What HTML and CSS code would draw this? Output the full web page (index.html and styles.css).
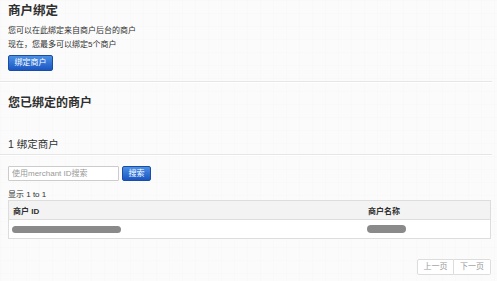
FILE: index.html
```html
<!DOCTYPE html>
<html lang="zh-CN">
<head>
  <meta charset="UTF-8">
  <meta name="viewport" content="width=device-width, initial-scale=1.0">
  <title>商户绑定</title>
  <link rel="stylesheet" href="styles.css">
</head>
<body>
  <div class="page">
    <h1>商户绑定</h1>
    <p class="intro">您可以在此绑定来自商户后台的商户</p>
    <p class="intro">现在，您最多可以绑定5个商户</p>
    <button class="btn btn-bind" type="button">绑定商户</button>

    <hr class="divider">

    <h2>您已绑定的商户</h2>
    <h3>1 绑定商户</h3>
    <hr class="divider divider-tight">

    <form class="search-form">
      <input type="text" class="search-input" placeholder="使用merchant ID搜索">
      <button class="btn btn-search" type="submit">搜索</button>
    </form>

    <div class="count">显示 1 to 1</div>
    <table class="merchant-table">
      <thead>
        <tr>
          <th class="col-id">商户 ID</th>
          <th>商户名称</th>
        </tr>
      </thead>
      <tbody>
        <tr>
          <td><span class="redacted redacted-id"></span></td>
          <td><span class="redacted redacted-name"></span></td>
        </tr>
      </tbody>
    </table>

    <div class="pager">
      <span class="pager-item">上一页</span>
      <span class="pager-item">下一页</span>
    </div>
  </div>
</body>
</html>
```
FILE: styles.css
```css
body {
  margin: 0;
  font-family: "Liberation Sans", "Noto Sans CJK SC", sans-serif;
  color: #2f2f2f;
  background-color: #fbfbfb;
  background-image:
    linear-gradient(rgba(0, 0, 0, 0.006) 1px, transparent 1px),
    linear-gradient(90deg, rgba(0, 0, 0, 0.006) 1px, transparent 1px);
  background-size: 13px 13px;
}
.page {
  padding: 0 6px 0 8px;
}
h1 {
  font-size: 12.5px;
  font-weight: bold;
  line-height: 16px;
  margin: 3px 0 5px;
}
.intro {
  font-size: 8px;
  line-height: 13.5px;
  margin: 0;
}
.btn {
  font-family: inherit;
  font-size: 8px;
  color: #fff;
  height: 16px;
  padding: 0;
  text-align: center;
  border: 1px solid #1b4ea3;
  border-radius: 2px;
  background: linear-gradient(#4b91e6, #1a55c2);
  cursor: pointer;
  line-height: 14px;
}
.btn-bind {
  display: block;
  width: 45px;
  margin-top: 4px;
}
.divider {
  border: none;
  border-top: 1px solid #e6e6e6;
  border-bottom: 1px solid #fff;
  margin: 10px 0 0 -8px;
  width: 492px;
}
h2 {
  font-size: 12px;
  font-weight: bold;
  line-height: 16px;
  margin: 12px 0 0;
}
h3 {
  font-size: 10.5px;
  font-weight: normal;
  line-height: 14px;
  margin: 26px 0 0;
}
.divider-tight {
  margin-top: 3px;
}
.search-form {
  display: flex;
  gap: 3px;
  margin-top: 10px;
}
.search-input {
  box-sizing: border-box;
  width: 111px;
  height: 15px;
  padding: 0 3px;
  font-family: inherit;
  font-size: 8px;
  border: 1px solid #ccc;
  border-radius: 1px;
  background: #fff;
}
.search-input::placeholder {
  color: #999;
}
.btn-search {
  width: 29px;
  height: 15px;
  line-height: 13px;
}
.count {
  font-size: 8px;
  line-height: 11px;
  margin-top: 8px;
}
.merchant-table {
  width: 483px;
  border-collapse: collapse;
  border: 1px solid #ddd;
  font-size: 8px;
}
.merchant-table th {
  text-align: left;
  font-weight: bold;
  height: 18px;
  padding: 0 4px;
  background: #f3f3f3;
  border-bottom: 1px solid #ddd;
}
.merchant-table td {
  height: 18px;
  padding: 0 3px;
  background: #fff;
}
.col-id {
  width: 347px;
}
.redacted {
  display: block;
  height: 7px;
  border-radius: 4px;
  background: #8a8a8a;
  filter: blur(0.7px);
}
.redacted-id {
  width: 109px;
}
.redacted-name {
  width: 39px;
  height: 8px;
}
.pager {
  display: flex;
  justify-content: flex-end;
  margin-top: 20px;
}
.pager-item {
  box-sizing: border-box;
  width: 37px;
  height: 16px;
  line-height: 14px;
  text-align: center;
  font-size: 8px;
  color: #999;
  background: #fff;
  border: 1px solid #ddd;
}
.pager-item:first-child {
  border-radius: 2px 0 0 2px;
}
.pager-item + .pager-item {
  border-left: none;
  border-radius: 0 2px 2px 0;
}
```
